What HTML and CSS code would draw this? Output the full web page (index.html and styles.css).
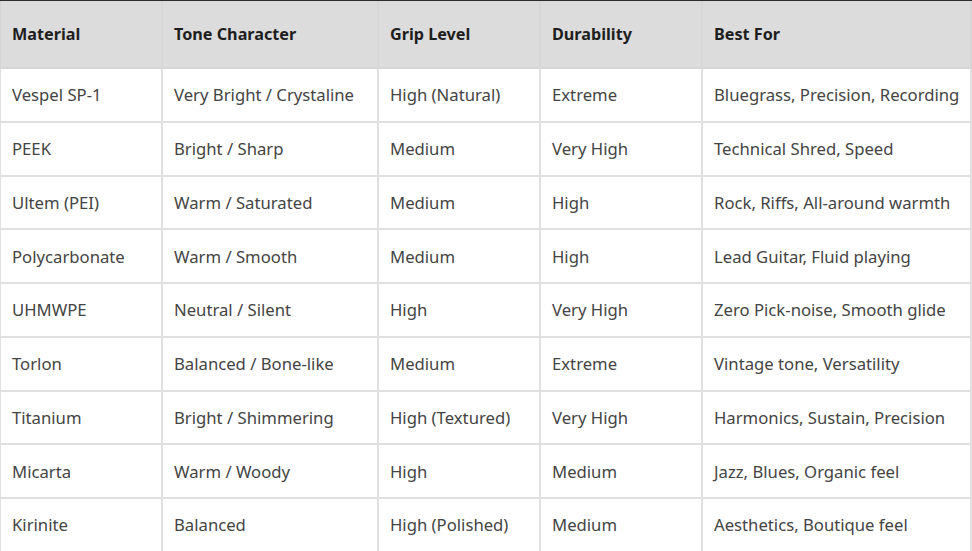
FILE: index.html
```html
<!DOCTYPE html>
<html>
<head>
<meta charset="utf-8">
<link rel="stylesheet" href="styles.css">
</head>
<body>
<div class="topline"></div>
<table class="grid">
  <colgroup>
    <col class="c1"><col class="c2"><col class="c3"><col class="c4"><col class="c5">
  </colgroup>
  <thead>
    <tr><th>Material</th><th>Tone Character</th><th>Grip Level</th><th>Durability</th><th>Best For</th></tr>
  </thead>
  <tbody>
    <tr><td>Vespel SP-1</td><td>Very Bright / Crystaline</td><td>High (Natural)</td><td>Extreme</td><td>Bluegrass, Precision, Recording</td></tr>
    <tr><td>PEEK</td><td>Bright / Sharp</td><td>Medium</td><td>Very High</td><td>Technical Shred, Speed</td></tr>
    <tr><td>Ultem (PEI)</td><td>Warm / Saturated</td><td>Medium</td><td>High</td><td>Rock, Riffs, All-around warmth</td></tr>
    <tr><td>Polycarbonate</td><td>Warm / Smooth</td><td>Medium</td><td>High</td><td>Lead Guitar, Fluid playing</td></tr>
    <tr><td>UHMWPE</td><td>Neutral / Silent</td><td>High</td><td>Very High</td><td>Zero Pick-noise, Smooth glide</td></tr>
    <tr><td>Torlon</td><td>Balanced / Bone-like</td><td>Medium</td><td>Extreme</td><td>Vintage tone, Versatility</td></tr>
    <tr><td>Titanium</td><td>Bright / Shimmering</td><td>High (Textured)</td><td>Very High</td><td>Harmonics, Sustain, Precision</td></tr>
    <tr><td>Micarta</td><td>Warm / Woody</td><td>High</td><td>Medium</td><td>Jazz, Blues, Organic feel</td></tr>
    <tr><td>Kirinite</td><td>Balanced</td><td>High (Polished)</td><td>Medium</td><td>Aesthetics, Boutique feel</td></tr>
  </tbody>
</table>
</body>
</html>
```
FILE: styles.css
```css
html, body {
  margin: 0;
  padding: 0;
  background: #ffffff;
}
body {
  width: 972px;
  height: 551px;
  overflow: hidden;
  font-family: "Noto Sans", "Open Sans", sans-serif;
}
.topline {
  height: 1px;
  background: #2b2b2b;
}
.grid {
  border-collapse: collapse;
  table-layout: fixed;
  width: 971px;
  margin-left: -1px;
}
.c1 { width: 162px; }
.c2 { width: 216px; }
.c3 { width: 162px; }
.c4 { width: 162px; }
.c5 { width: 269px; }
.grid th, .grid td {
  border: 2px solid #e0e0e0;
  text-align: left;
  padding: 0 0 0 11px;
  white-space: nowrap;
}
.grid th {
  height: 66px;
  background: #dcdcdc;
  border-color: #d6d6d6;
  border-top: 0;
  color: #1e1e1e;
  font-weight: 700;
  font-size: 16.2px;
}
.grid td {
  height: 51.75px;
  color: #444444;
  font-weight: 400;
  font-size: 16.7px;
}
```
